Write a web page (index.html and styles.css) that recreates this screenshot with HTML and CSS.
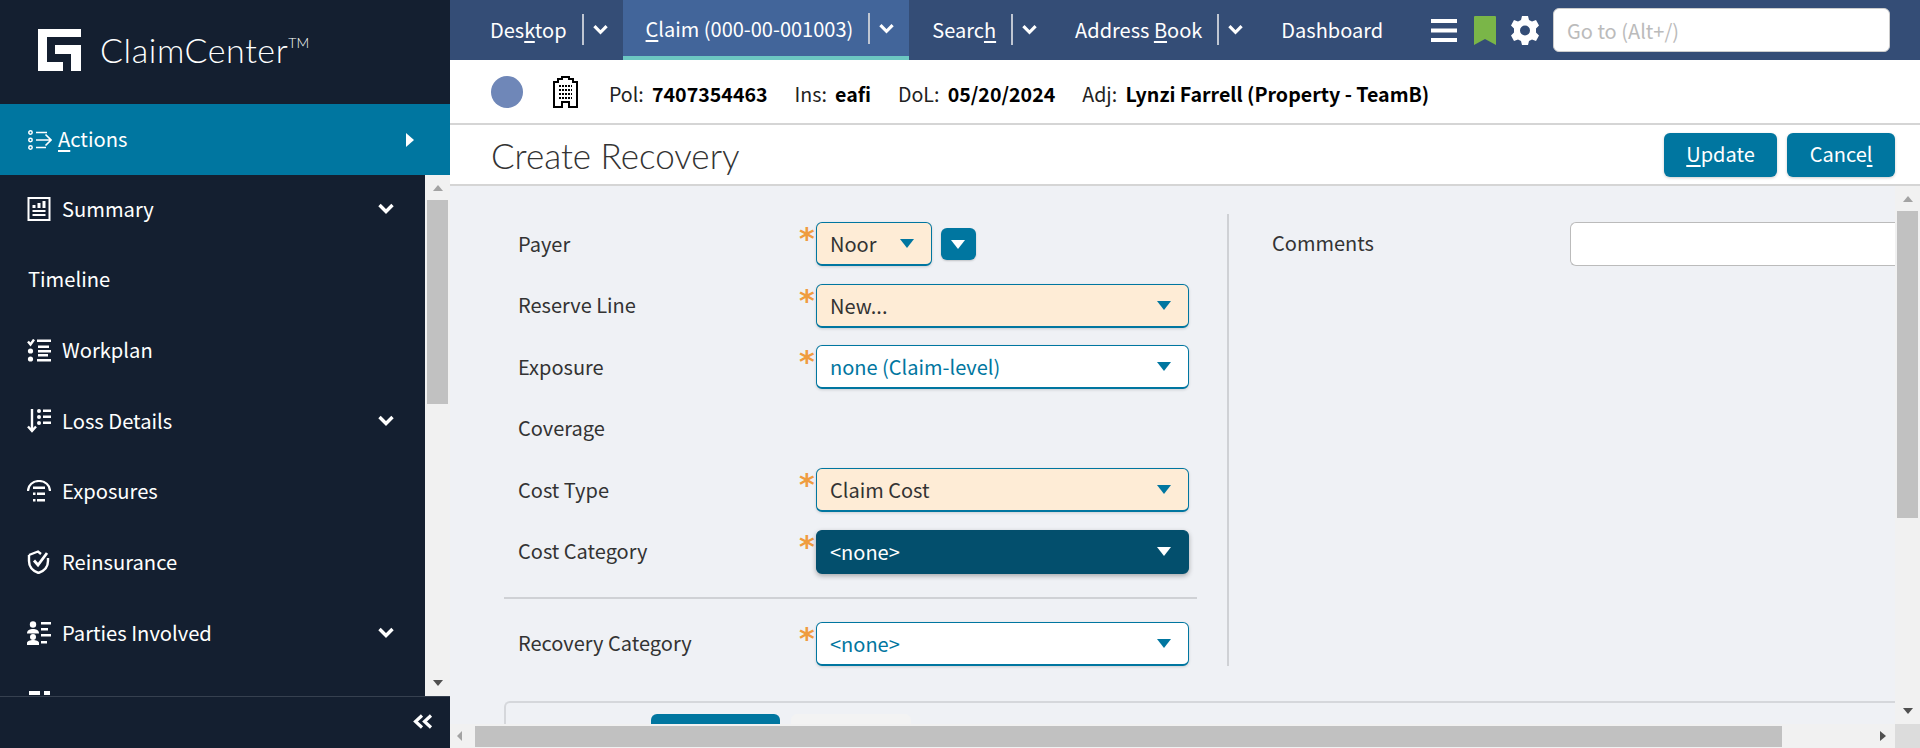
FILE: index.html
```html
<!DOCTYPE html>
<html lang="en">
<head>
<meta charset="UTF-8">
<title>ClaimCenter - Create Recovery</title>
<link rel="stylesheet" href="styles.css">
</head>
<body>

<div class="shell">
    <aside class="sidebar">
        <div class="brand">
            <svg class="brand-logo" viewBox="0 0 43 42" width="43" height="42"><path fill="#fff" d="M0 0H43V8H9V33H25V42H0Z M17 16H43V42H33V25H17Z"/></svg>
            <span class="brand-name">ClaimCenter<sup>TM</sup></span>
        </div>
        <div class="nav-actions">
            <svg class="nav-icon" viewBox="0 0 24 20" width="24" height="20" fill="none" stroke="#fff"><circle cx="2.5" cy="2.5" r="1.7" stroke-width="1.5"/><circle cx="2.5" cy="10" r="1.7" stroke-width="1.5"/><circle cx="2.5" cy="17.5" r="1.7" stroke-width="1.5"/><path stroke-width="1.6" d="M8 2.5H19M8 10H22M8 17.5H18M17.5 4.5L23 10L17.5 15.5"/></svg>
            <span class="nav-actions-text"><span class="key">A</span>ctions</span>
            <span class="arrow-right"></span>
        </div>
        <div class="nav-wrap">
            <nav class="nav-list">
                <div class="nav-item">
                    <svg class="nav-icon" viewBox="0 0 23 24" width="23" height="24"><path fill="none" stroke="#fff" stroke-width="2" d="M1 1H22V23H1Z"/><path fill="#fff" d="M5 8H8V11H5ZM10 6H13V11H10ZM15 4H18V11H15ZM5 13H18V15H5ZM5 17H18V19H5Z"/></svg>
                    <span>Summary</span>
                    <svg class="chev" viewBox="0 0 16 11" width="16" height="11"><path fill="none" stroke="#fff" stroke-width="3.4" d="M1.5 2L8 8.5L14.500 2"/></svg>
                </div>
                <div class="nav-item nav-plain"><span>Timeline</span></div>
                <div class="nav-item">
                    <svg class="nav-icon" viewBox="0 0 24 23" width="24" height="23"><path fill="none" stroke="#fff" stroke-width="2.4" d="M1 2.5L3.5 5.5L7 0.5"/><circle cx="3.5" cy="12" r="2.6" fill="#fff"/><circle cx="3.5" cy="20" r="2.6" fill="#fff"/><path fill="#fff" d="M10 0.500H24V3H10ZM11 6.500H22V9H11ZM11 11H24V13.500H11ZM11 15H21V17.500H11ZM10 20H24V22.500H10Z"/></svg>
                    <span>Workplan</span>
                </div>
                <div class="nav-item">
                    <svg class="nav-icon" viewBox="0 0 24 24" width="24" height="24"><path fill="none" stroke="#fff" stroke-width="2.4" d="M5 0V22M1 17.5L5 22L9 17.5"/><circle cx="12" cy="2" r="2" fill="#fff"/><circle cx="12" cy="8" r="2" fill="#fff"/><circle cx="12" cy="14" r="2" fill="#fff"/><path fill="#fff" d="M16 0.500H24V3H16ZM16 6.500H24V9H16ZM16 12.500H24V15H16Z"/></svg>
                    <span>Loss Details</span>
                    <svg class="chev" viewBox="0 0 16 11" width="16" height="11"><path fill="none" stroke="#fff" stroke-width="3.4" d="M1.5 2L8 8.5L14.500 2"/></svg>
                </div>
                <div class="nav-item">
                    <svg class="nav-icon" viewBox="0 0 24 22" width="24" height="22"><path fill="none" stroke="#fff" stroke-width="2.2" d="M1 11C1 5 6 1 12 1S23 5 23 11"/><path fill="#fff" d="M6 6.500H18V9H6ZM6 12.500H8.500V15H6ZM10 12.500H18V15H10ZM6 19H8.500V21.500H6ZM10 19H18V21.500H10Z"/></svg>
                    <span>Exposures</span>
                </div>
                <div class="nav-item">
                    <svg class="nav-icon" viewBox="0 0 24 24" width="24" height="24"><path fill="none" stroke="#fff" stroke-width="2.4" d="M2 5L11 1.500L14 4M21 8V11C21 17 17 21 11.500 23C6 21 2 17 2 11V5"/><path fill="none" stroke="#fff" stroke-width="2.800" d="M7 10.500L11 15L20 3"/></svg>
                    <span>Reinsurance</span>
                </div>
                <div class="nav-item">
                    <svg class="nav-icon" viewBox="0 0 24 24" width="24" height="24"><g fill="#fff"><circle cx="6" cy="3.500" r="3.200"/><path d="M0 12.500C0 9 3 8 6 8S12 9 12 12.500Z"/><circle cx="6" cy="16" r="3"/><path d="M0 24V22C0 20 3 19 6 19S12 20 12 22V24Z"/><path d="M14 1H24V3.500H14ZM14 7H21V9.500H14ZM14 13H24V15.500H14ZM14 20H20V22.500H14Z"/></g></svg>
                    <span>Parties Involved</span>
                    <svg class="chev" viewBox="0 0 16 11" width="16" height="11"><path fill="none" stroke="#fff" stroke-width="3.4" d="M1.5 2L8 8.500L14.500 2"/></svg>
                </div>
                <div class="nav-item">
                    <svg class="nav-icon" viewBox="0 0 22 24" width="22" height="24"><path fill="#fff" d="M1 0H12V4H1ZM16 0H22V4H16Z"/></svg>
                </div>
            </nav>
            <div class="nav-scroll">
                <span class="sb-up"></span>
                <div class="nav-thumb"></div>
                <span class="sb-down"></span>
            </div>
        </div>
        <div class="sidebar-foot">
            <svg viewBox="0 0 20 15" width="20" height="15"><path fill="none" stroke="#fff" stroke-width="3.2" d="M9 1.500L2.500 7.500L9 13.500M18 1.500L11.500 7.500L18 13.500"/></svg>
        </div>
    </aside>

    <div class="main">
        <header class="topbar">
            <div class="tab tab-first">
                <span>Des<span class="key">k</span>top</span><i class="tab-sep"></i>
                <svg viewBox="0 0 16 11" width="15" height="11"><path fill="none" stroke="#fff" stroke-width="3.4" d="M1.500 2L8 8.500L14.500 2"/></svg>
            </div>
            <div class="tab tab-active">
                <span><span class="key">C</span>laim (000-00-001003)</span><i class="tab-sep"></i>
                <svg viewBox="0 0 16 11" width="15" height="11"><path fill="none" stroke="#fff" stroke-width="3.4" d="M1.500 2L8 8.500L14.500 2"/></svg>
            </div>
            <div class="tab">
                <span>Searc<span class="key">h</span></span><i class="tab-sep"></i>
                <svg viewBox="0 0 16 11" width="15" height="11"><path fill="none" stroke="#fff" stroke-width="3.4" d="M1.500 2L8 8.500L14.500 2"/></svg>
            </div>
            <div class="tab">
                <span>Address <span class="key">B</span>ook</span><i class="tab-sep"></i>
                <svg viewBox="0 0 16 11" width="15" height="11"><path fill="none" stroke="#fff" stroke-width="3.4" d="M1.500 2L8 8.500L14.500 2"/></svg>
            </div>
            <div class="tab"><span>Dashboard</span></div>
            <div class="tools">
                <svg viewBox="0 0 26 23" width="26" height="23"><path fill="#fff" d="M0 0H26V4H0ZM0 9.500H26V13.500H0ZM0 19H26V23H0Z"/></svg>
                <svg class="tool-mark" viewBox="0 0 22 29" width="22" height="29"><path fill="#7ab648" d="M1 0H21A1 1 0 0 1 22 1V29L11 23L0 29V1A1 1 0 0 1 1 0Z"/></svg>
                <svg viewBox="0 0 28 29" width="28" height="29"><path fill="#fff" fill-rule="evenodd" d="M11 0H17L18 4L21 5.500L25 4L28 9.500L25 12.500V16.500L28 19.500L25 25L21 23.500L18 25L17 29H11L10 25L7 23.500L3 25L0 19.500L3 16.500V12.500L0 9.500L3 4L7 5.500L10 4ZM14 9.500A5 5 0 1 0 14 19.500A5 5 0 1 0 14 9.500Z"/></svg>
                <input class="goto" type="text" placeholder="Go to (Alt+/)">
            </div>
        </header>

        <div class="infobar">
            <span class="status-dot"></span>
            <svg class="building" viewBox="0 0 25 32" width="25" height="32"><path fill="none" stroke="#000" stroke-width="2" d="M1 31V6H5V3H9V1H16V3H20V6H24V31H16V26H9V31Z"/><path stroke="#000" stroke-width="2" stroke-dasharray="2 1" d="M6 10H19M6 14H19M6 18H19M6 22H19"/></svg>
            <span class="info-label">Pol:</span><b class="info-value">7407354463</b>
            <span class="info-label">Ins:</span><b class="info-value">eafi</b>
            <span class="info-label">DoL:</span><b class="info-value">05/20/2024</b>
            <span class="info-label">Adj:</span><b class="info-value">Lynzi Farrell (Property - TeamB)</b>
        </div>

        <div class="titlebar">
            <h1>Create Recovery</h1>
            <button class="btn btn-update" type="button"><span class="key">U</span>pdate</button>
            <button class="btn" type="button">Cance<span class="key">l</span></button>
        </div>

        <div class="workspace">
            <section class="content">
                <div class="columns">
                    <div class="col-left">
                        <div class="row">
                            <label>Payer</label><span class="req">*</span>
                            <div class="select select-req select-short">Noor</div>
                            <span class="picker"></span>
                        </div>
                        <div class="row">
                            <label>Reserve Line</label><span class="req">*</span>
                            <div class="select select-req">New...</div>
                        </div>
                        <div class="row">
                            <label>Exposure</label><span class="req">*</span>
                            <div class="select">none (Claim-level)</div>
                        </div>
                        <div class="row">
                            <label>Coverage</label>
                        </div>
                        <div class="row">
                            <label>Cost Type</label><span class="req">*</span>
                            <div class="select select-req">Claim Cost</div>
                        </div>
                        <div class="row">
                            <label>Cost Category</label><span class="req">*</span>
                            <div class="select select-focus">&lt;none&gt;</div>
                        </div>
                        <hr class="col-rule">
                        <div class="row row-last">
                            <label>Recovery Category</label><span class="req">*</span>
                            <div class="select">&lt;none&gt;</div>
                        </div>
                    </div>
                    <div class="col-right">
                        <label>Comments</label>
                        <input class="comments" type="text">
                    </div>
                </div>
                <div class="panel">
                    <span class="panel-tab panel-tab-on"></span>
                    <span class="panel-tab"></span>
                </div>
            </section>
            <div class="vscroll">
                <span class="sb-up"></span>
                <div class="vthumb"></div>
                <span class="sb-down"></span>
            </div>
            <div class="hscroll">
                <span class="sb-left"></span>
                <div class="hthumb"></div>
                <span class="sb-right"></span>
            </div>
            <div class="corner"></div>
        </div>
    </div>
</div>

</body>
</html>
```

FILE: styles.css
```css
* {
    box-sizing: border-box;
}
html, body {
    height: 100%;
}
body {
    margin: 0;
    overflow: hidden;
    font-family: "Noto Sans CJK JP", "Noto Sans", sans-serif;
    font-size: 20px;
    color: #333;
    background-color: #eff1f5;
}
.key {
    text-decoration: underline;
    text-underline-offset: 3px;
    text-decoration-thickness: 2px;
}
.shell {
    display: flex;
    height: 748px;
}

/* sidebar */
.sidebar {
    display: flex;
    flex-direction: column;
    flex: 0 0 450px;
    background-color: #141f30;
    color: #fff;
    font-size: 20.16px;
}
.brand {
    display: flex;
    align-items: flex-start;
    height: 104px;
    padding: 29px 0 0 38px;
}
.brand-name {
    margin: 1px 0 0 19px;
    font-family: Lato, sans-serif;
    font-weight: 300;
    font-size: 34px;
    line-height: 40px;
    letter-spacing: 0.6px;
}
.brand-name sup {
    font-size: 14px;
    line-height: 0;
    vertical-align: 15px;
    letter-spacing: 0;
}
.nav-actions {
    display: flex;
    align-items: center;
    height: 71px;
    padding: 0 36px 0 28px;
    background-color: #0076a0;
}
.nav-actions-text {
    margin: -2px 0 0 6px;
}
.arrow-right {
    margin-left: auto;
    border-left: 8px solid #fff;
    border-top: 7px solid transparent;
    border-bottom: 7px solid transparent;
}
.nav-wrap {
    display: flex;
    flex: 1;
    min-height: 0;
}
.nav-list {
    flex: 1;
    overflow: hidden;
}
.nav-item {
    display: flex;
    align-items: center;
    height: 70.67px;
    padding: 0 31px 0 27px;
}
.nav-item:first-child {
    margin-top: -1.5px;
}
.nav-item > span {
    margin: -1px 0 0 11px;
}
.nav-item > .nav-icon {
    flex: 0 0 24px;
}
.nav-item.nav-plain > span {
    margin-left: 1px;
}
.chev {
    margin-left: auto;
}
.nav-scroll {
    display: flex;
    flex-direction: column;
    align-items: center;
    flex: 0 0 25px;
    background-color: #f1f1f1;
}
.nav-thumb {
    width: 21px;
    height: 204px;
    background-color: #c1c1c1;
}
.sb-up, .sb-down {
    flex: none;
    width: 0;
    height: 0;
    border-left: 5.5px solid transparent;
    border-right: 5.5px solid transparent;
}
.sb-up {
    margin: 10px 0 9px;
    border-bottom: 6px solid #a3a3a3;
}
.sb-down {
    margin-top: auto;
    margin-bottom: 10px;
    border-top: 6px solid #505050;
}
.sidebar-foot {
    display: flex;
    justify-content: flex-end;
    height: 52px;
    padding: 17px 17px 0 0;
    border-top: 1px solid #36404f;
}

/* top */
.main {
    display: flex;
    flex-direction: column;
    flex: 1;
    min-width: 0;
}
.topbar {
    display: flex;
    flex: 0 0 60px;
    background-color: #344d76;
    color: #fff;
}
.tab {
    display: flex;
    align-items: center;
    padding: 0 15px 2px 23px;
}
.tab-first {
    margin-left: 17px;
}
.tab-active {
    background-color: #42659a;
    border-bottom: 4px solid #6cc7c2;
    padding-bottom: 0;
}
.tab-sep {
    width: 2px;
    height: 31px;
    margin: 0 9px 0 15px;
    background-color: #bfc6d2;
}
.tools {
    display: flex;
    align-items: center;
    gap: 16px;
    margin-left: auto;
    padding-right: 30px;
}
.tool-mark {
    margin: 0 -1px 0 1px;
}
.goto {
    width: 337px;
    height: 44px;
    margin-left: -2px;
    padding: 0 13px;
    border: 1px solid #ccc;
    border-radius: 6px;
    background-color: #fff;
    font: inherit;
}
.goto::placeholder {
    color: #bbb;
    opacity: 1;
}
.infobar {
    display: flex;
    align-items: center;
    flex: 0 0 65px;
    padding-left: 41px;
    background-color: #fff;
    border-bottom: 2px solid #d5d5d5;
    color: #000;
    font-size: 19.6px;
}
.status-dot {
    width: 32px;
    height: 32px;
    border-radius: 50%;
    background-color: #6f87b8;
}
.building {
    margin: 0 31px 0 30px;
}
.info-label, .info-value {
    padding-top: 4px;
}
.info-label {
    margin-right: 8.2px;
    color: #222;
}
.info-value {
    margin-right: 27px;
    font-weight: 700;
}
.titlebar {
    display: flex;
    align-items: center;
    flex: 0 0 61px;
    padding: 0 25px 0 41px;
    background-color: #fff;
    border-bottom: 2px solid #d5d5d5;
}
h1 {
    flex: 1;
    margin: 0;
    font-family: Lato, sans-serif;
    font-size: 35px;
    font-weight: 300;
    color: #333;
}
.btn {
    height: 44px;
    padding: 0 22.5px 2px;
    border: none;
    border-radius: 6px;
    background-color: #0076a0;
    color: #fff;
    font: inherit;
    box-shadow: 0 1px 3px rgba(0, 0, 0, 0.2);
}
.btn-update {
    margin-right: 10px;
}

/* form */
.workspace {
    display: grid;
    flex: 1;
    min-height: 0;
    grid-template-columns: 1fr 25px;
    grid-template-rows: 1fr 24px;
}
.content {
    overflow: hidden;
    padding: 36px 0 0 54px;
}
.columns {
    display: flex;
}
.col-left {
    flex: 0 0 693px;
}
.row {
    display: flex;
    align-items: center;
    height: 44px;
    margin-bottom: 17.5px;
    padding-left: 14px;
}
.row label {
    flex: 0 0 282px;
    margin-top: -2px;
}
.row-last {
    margin-bottom: 0;
}
.req {
    flex: 0 0 17px;
    align-self: flex-start;
    min-width: 0;
    height: 24px;
    margin-left: -1px;
    color: #ef9c3f;
    font-family: "DejaVu Sans", sans-serif;
    font-size: 30px;
    font-weight: 700;
    line-height: 33px;
}
.select {
    position: relative;
    width: 373px;
    height: 44px;
    padding: 0 40px 0 13px;
    border: 1px solid #0076a0;
    border-bottom-width: 2px;
    border-radius: 6px;
    background-color: #fff;
    color: #0076a0;
    line-height: 41px;
    box-shadow: 0 1px 3px rgba(0, 0, 0, 0.15);
}
.select::after {
    content: "";
    position: absolute;
    top: 16px;
    right: 17px;
    border-top: 9px solid #0076a0;
    border-left: 7px solid transparent;
    border-right: 7px solid transparent;
}
.select-req {
    background-color: #feecd6;
    color: #333;
}
.select-short {
    width: 116px;
}
.select-focus {
    border-color: #034f6d;
    background-color: #034f6d;
    color: #fff;
    box-shadow: 0 2px 5px rgba(0, 0, 0, 0.3);
}
.select-focus::after {
    border-top-color: #fff;
}
.picker {
    position: relative;
    width: 35px;
    height: 32px;
    margin-left: 9px;
    border-radius: 6px;
    background-color: #0076a0;
    box-shadow: 0 1px 2px rgba(0, 0, 0, 0.2);
}
.picker::after {
    content: "";
    position: absolute;
    top: 12px;
    left: 10px;
    border-top: 9px solid #fff;
    border-left: 7px solid transparent;
    border-right: 7px solid transparent;
}
.col-rule {
    height: 2px;
    margin: 23px 0 23px;
    border: none;
    background-color: #cfd1d5;
}
.col-right {
    display: flex;
    align-items: flex-start;
    flex: 1;
    min-width: 0;
    margin: -8px 0 0 30px;
    padding: 8px 0 0 43px;
    border-left: 2px solid #cfd1d5;
}
.col-right label {
    flex: 0 0 298px;
    line-height: 42px;
}
.comments {
    flex: 1;
    min-width: 0;
    height: 44px;
    border: 1px solid #bbb;
    border-right: none;
    border-radius: 6px 0 0 6px;
    background-color: #fff;
}
.panel {
    display: flex;
    gap: 11px;
    height: 60px;
    margin-top: 35px;
    padding: 11px 0 0 145px;
    border: 2px solid #d5d7db;
    border-right: none;
    border-bottom: none;
    border-radius: 6px 0 0 0;
}
.panel-tab {
    width: 120px;
    height: 40px;
    border-radius: 6px 6px 0 0;
    background-color: #f3f3f3;
}
.panel-tab-on {
    width: 129px;
    background-color: #0076a0;
}
.vscroll {
    display: flex;
    flex-direction: column;
    align-items: center;
    background-color: #f1f1f1;
}
.vthumb {
    width: 21px;
    height: 307px;
    background-color: #c1c1c1;
}
.hscroll {
    display: flex;
    align-items: center;
    padding-right: 9px;
    background-color: #f1f1f1;
}
.hthumb {
    width: 1307px;
    height: 21px;
    background-color: #c1c1c1;
}
.sb-left, .sb-right {
    width: 0;
    height: 0;
    border-top: 5.5px solid transparent;
    border-bottom: 5.5px solid transparent;
}
.sb-left {
    margin: 0 13px 0 7px;
    border-right: 5px solid #a3a3a3;
}
.sb-right {
    margin-left: auto;
    border-left: 6px solid #505050;
}
.corner {
    background-color: #dcdcdc;
}
```
